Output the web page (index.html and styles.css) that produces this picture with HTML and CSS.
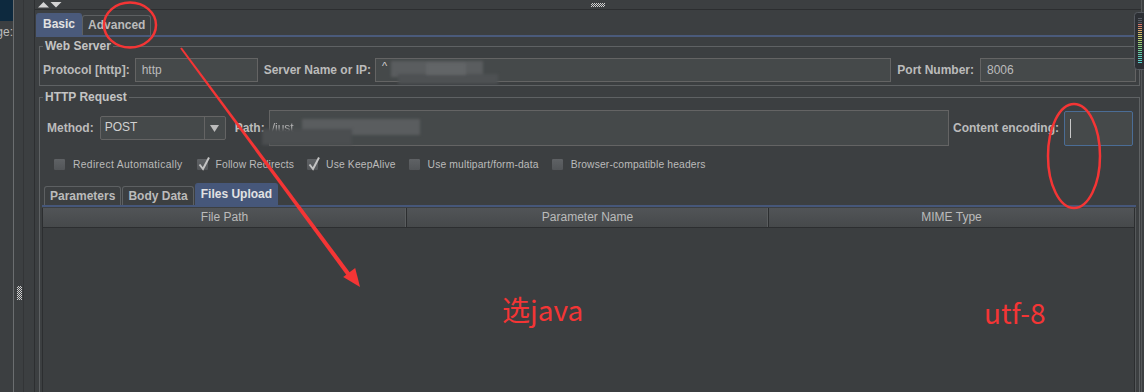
FILE: index.html
```html
<!DOCTYPE html>
<html>
<head>
<meta charset="utf-8">
<title>HTTP Request</title>
<link rel="stylesheet" href="styles.css">
</head>
<body>
<div class="app">
  <aside class="tree">
    <div class="tree-sel"></div>
    <div class="tree-row"><span>Message:</span></div>
  </aside>
  <div class="split">
    <div class="split-a"><div class="grip-v"></div></div>
    <div class="split-b"></div>
  </div>
  <main class="main">
    <div class="topbar">
      <svg class="arrows" width="24" height="6" viewBox="0 0 24 6">
        <polygon points="0,5.5 5.5,0 11,5.5" fill="#d4d4d4"/>
        <polygon points="12.5,0 23.5,0 18,5.5" fill="#d4d4d4"/>
      </svg>
      <div class="grip-h"></div>
    </div>
    <div class="tabs">
      <div class="tab sel">Basic</div>
      <div class="tab">Advanced</div>
    </div>
    <div class="tabline"></div>
    <div class="content">
      <fieldset class="group ws">
        <legend>Web Server</legend>
        <div class="row">
          <span class="lbl">Protocol [http]:</span>
          <div class="field proto">http</div>
          <span class="lbl gap7">Server Name or IP:</span>
          <div class="field server"><span class="mark">^</span><span class="blur b1"></span><span class="blur b2"></span><span class="blur b3"></span></div>
          <span class="lbl gap6">Port Number:</span>
          <div class="field port">8006</div>
        </div>
      </fieldset>
      <fieldset class="group http">
        <legend>HTTP Request</legend>
        <div class="row method-row">
          <span class="lbl">Method:</span>
          <div class="combo">
            <span class="combo-val">POST</span>
            <span class="combo-btn"><svg width="9" height="7" viewBox="0 0 9 7"><polygon points="0,0 9,0 4.5,7" fill="#bbbbbb"/></svg></span>
          </div>
          <span class="lbl path-lbl">Path:</span>
          <div class="field path"><span class="path-txt">/just</span><span class="blur p1"></span><span class="blur p2"></span></div>
          <span class="lbl gap5">Content encoding:</span>
          <div class="field enc"><span class="caret"></span></div>
        </div>
        <div class="checks">
          <label class="chk"><span class="box"></span>Redirect Automatically</label>
          <label class="chk"><span class="box on"><svg width="14" height="15" viewBox="0 0 14 15"><polyline points="2.5,8.5 6,13 12,1.5" fill="none" stroke="#c4c4c4" stroke-width="2"/></svg></span>Follow Redirects</label>
          <label class="chk"><span class="box on"><svg width="14" height="15" viewBox="0 0 14 15"><polyline points="2.5,8.5 6,13 12,1.5" fill="none" stroke="#c4c4c4" stroke-width="2"/></svg></span>Use KeepAlive</label>
          <label class="chk"><span class="box"></span>Use multipart/form-data</label>
          <label class="chk"><span class="box"></span>Browser-compatible headers</label>
        </div>
        <div class="subtabs">
          <div class="stab">Parameters</div>
          <div class="stab">Body Data</div>
          <div class="stab sel">Files Upload</div>
        </div>
        <div class="subline"></div>
        <div class="table">
          <div class="thead">
            <div class="th">File Path</div>
            <div class="th">Parameter Name</div>
            <div class="th last">MIME Type</div>
          </div>
          <div class="tbody"></div>
        </div>
      </fieldset>
    </div>
  </main>
</div>

<div class="memwidget">
  <svg width="10" height="58" viewBox="0 0 10 58">
    <rect x="0.5" y="0.5" width="12" height="57" rx="3" fill="#2c2f34" stroke="#565a61"/>
    <g stroke-width="1">
      <line x1="4" x2="8" y1="6.5" y2="6.5" stroke="#5a5e66"/>
      <line x1="4" x2="8" y1="8.5" y2="8.5" stroke="#5a5e66"/>
      <line x1="4" x2="8" y1="10.5" y2="10.5" stroke="#5a5e66"/>
      <line x1="4" x2="8" y1="12.5" y2="12.5" stroke="#d9766a"/>
      <line x1="4" x2="8" y1="14.5" y2="14.5" stroke="#d9856a"/>
      <line x1="4" x2="8" y1="16.5" y2="16.5" stroke="#d9956a"/>
      <line x1="4" x2="8" y1="18.5" y2="18.5" stroke="#d9a66a"/>
      <line x1="4" x2="8" y1="20.5" y2="20.5" stroke="#d6b66a"/>
      <line x1="4" x2="8" y1="22.5" y2="22.5" stroke="#d2c56b"/>
      <line x1="4" x2="8" y1="24.5" y2="24.5" stroke="#cccd6c"/>
      <line x1="4" x2="8" y1="26.5" y2="26.5" stroke="#c0cf6e"/>
      <line x1="4" x2="8" y1="28.5" y2="28.5" stroke="#b2cf70"/>
      <line x1="4" x2="8" y1="30.5" y2="30.5" stroke="#a2cf74"/>
      <line x1="4" x2="8" y1="32.5" y2="32.5" stroke="#94cf7a"/>
      <line x1="4" x2="8" y1="34.5" y2="34.5" stroke="#86cf82"/>
      <line x1="4" x2="8" y1="36.5" y2="36.5" stroke="#7acf8c"/>
      <line x1="4" x2="8" y1="38.5" y2="38.5" stroke="#70cf98"/>
      <line x1="4" x2="8" y1="40.5" y2="40.5" stroke="#68cfa4"/>
      <line x1="4" x2="8" y1="42.5" y2="42.5" stroke="#62cfb0"/>
      <line x1="4" x2="8" y1="44.5" y2="44.5" stroke="#5ecfba"/>
      <line x1="4" x2="8" y1="46.5" y2="46.5" stroke="#5acfc2"/>
      <line x1="4" x2="8" y1="48.5" y2="48.5" stroke="#58cfc8"/>
      <line x1="4" x2="8" y1="50.5" y2="50.5" stroke="#56cfcc"/>
    </g>
  </svg>
</div>

<svg class="annot" width="1144" height="392" viewBox="0 0 1144 392">
  <ellipse cx="130" cy="25" rx="26" ry="22.5" fill="none" stroke="#f43535" stroke-width="2.5"/>
  <polygon points="180.2,48.6 181.8,47.4 350.9,273.9 347.5,276.5" fill="#f43535"/>
  <polygon points="360,287 343.2,277 355.2,268" fill="#f43535"/>
  <ellipse cx="1074" cy="156" rx="26" ry="52" fill="none" stroke="#f43535" stroke-width="2.5"/>
</svg>
<div class="note note1">选java</div>
<div class="note note2">utf-8</div>
</body>
</html>
```
FILE: styles.css
```css
* { box-sizing: border-box; }
html, body {
  margin: 0;
  width: 1144px;
  height: 392px;
  overflow: hidden;
  background: #3c3f41;
}
body {
  position: relative;
  font-family: "Liberation Sans", Arial, sans-serif;
  font-size: 12px;
  color: #bbbbbb;
}

.app {
  display: flex;
  height: 392px;
  padding-right: 2px;
}

/* left tree panel (clipped) */
.tree {
  width: 14px;
  flex: none;
  border-right: 1px solid #6b6e70;
  overflow: hidden;
  display: flex;
  flex-direction: column;
}
.tree-sel {
  height: 21px;
  background: #0d293e;
}
.tree-row {
  height: 20px;
  display: flex;
  justify-content: flex-end;
  align-items: center;
  white-space: nowrap;
  font-size: 12px;
  color: #bbbbbb;
  padding-top: 1px;
}

/* splitter */
.split {
  width: 21px;
  flex: none;
  display: flex;
  border-right: 1px solid #2d2f31;
}
.split-a {
  width: 10px;
  border-right: 1px solid #333537;
  display: flex;
  flex-direction: column;
  align-items: flex-end;
}
.grip-v {
  width: 5px;
  height: 14px;
  margin-top: 286px;
  margin-right: 1px;
  background: repeating-conic-gradient(#d0d0d0 0 25%, transparent 0 50%) 0 0 / 2px 2px;
}
.split-b {
  flex: 1;
}

/* main panel */
.main {
  flex: 1;
  display: flex;
  flex-direction: column;
  border-right: 1px solid #55585a;
  overflow: hidden;
}
.topbar {
  height: 10px;
  flex: none;
  display: flex;
  align-items: flex-start;
  border-bottom: 1px solid #2c2e30;
}
.arrows {
  margin: 2px 0 0 3px;
}
.grip-h {
  width: 14px;
  height: 4px;
  margin: 3px 0 0 529px;
  background: repeating-conic-gradient(#d0d0d0 0 25%, transparent 0 50%) 0 0 / 2px 2px;
}

.tabs {
  display: flex;
  align-items: flex-end;
  height: 22px;
  margin-top: 3px;
  padding-left: 1px;
  flex: none;
}
.tab {
  height: 20px;
  line-height: 19px;
  padding: 0 5px;
  border: 1px solid #5d6062;
  border-bottom: none;
  border-radius: 3px 3px 0 0;
  font-weight: bold;
  font-size: 12px;
  color: #bbbbbb;
}
.tab.sel {
  height: 22px;
  line-height: 21px;
  padding: 0 6px;
  background: #4a5a7b;
  border-color: #4a5a7b;
  color: #e2e2e2;
}
.tabline {
  height: 2px;
  flex: none;
  margin-left: 1px;
  background: #4a5a7b;
}

.content {
  flex: 1;
  display: flex;
  flex-direction: column;
  padding: 2px 1px 0 4px;
}

/* groups */
.group {
  margin: 0;
  min-width: 0;
  border: 1px solid #5f6264;
  padding: 0 3px 3px 2px;
}
.group legend {
  padding: 0 2px;
  margin-left: 1px;
  font-weight: bold;
  font-size: 12px;
  line-height: 14px;
  color: #c4c4c4;
}
.group.http {
  margin-top: 4px;
  flex: 1 0 auto;
  margin-bottom: -40px;
  padding-bottom: 0;
}

.row {
  display: flex;
  align-items: center;
}
.ws .row {
  margin-top: 5px;
  padding-left: 1px;
}
.lbl {
  font-weight: bold;
  font-size: 12px;
  color: #bbbbbb;
  white-space: nowrap;
  margin-right: 5px;
}
.gap7 { margin-left: 6px; margin-right: 4px; }
.gap6 { margin-left: 6px; margin-right: 6px; }
.gap5 { margin-left: 4px; margin-right: 5px; }

.field {
  position: relative;
  height: 24px;
  line-height: 22px;
  padding: 0 6px;
  background: #45494a;
  border: 1px solid #646464;
  font-size: 12px;
  color: #bbbbbb;
  white-space: nowrap;
}
.proto { width: 123px; }
.server { flex: 1; }
.port { width: 156px; }

.mark {
  position: absolute;
  left: 6px;
  top: -4px;
  font-size: 11px;
  color: #d0d0d0;
}
.blur {
  position: absolute;
  filter: blur(1.5px);
}
.b1 { left: 15px; top: 2px; width: 92px; height: 16px; background: #5a5d5f; }
.b2 { left: 22px; top: 15px; width: 100px; height: 10px; background: #4e5153; }
.b3 { left: 50px; top: 4px; width: 40px; height: 12px; background: #626567; }

/* method row */
.method-row {
  margin-top: 6px;
  padding: 0 3px 0 5px;
  height: 36px;
}
.combo {
  width: 126px;
  height: 24px;
  display: flex;
  margin-left: 1px;
  background: #45494a;
  border: 1px solid #646464;
  border-radius: 2px;
}
.combo-val {
  flex: 1;
  padding-left: 4px;
  line-height: 20px;
  font-size: 12px;
  color: #d2d2d2;
}
.combo-btn {
  width: 21px;
  border-left: 1px solid #646464;
  display: flex;
  align-items: center;
  justify-content: center;
}
.path-lbl { margin-left: 9px; margin-right: 4px; }
.path {
  flex: 1;
  height: 36px;
  line-height: 34px;
  padding-left: 2px;
}
.path-txt {
  color: #b5b5b5;
  filter: blur(0.4px);
}
.p1 { left: 32px; top: 8px; width: 118px; height: 16px; background: #5a5d5f; }
.p2 { left: -8px; top: 18px; width: 90px; height: 16px; background: #4b4e50; }
.enc {
  width: 69px;
  height: 35px;
  border: 1px solid #4b6d96;
  border-radius: 2px;
}
.caret {
  position: absolute;
  left: 5px;
  top: 7px;
  width: 1px;
  height: 19px;
  background: #c8c8c8;
}

/* checkboxes */
.checks {
  display: flex;
  align-items: center;
  margin-top: 12px;
  padding-left: 11px;
  height: 13px;
}
.chk {
  display: flex;
  align-items: center;
  font-size: 10.3px;
  letter-spacing: 0.15px;
  color: #bbbbbb;
  margin-right: 12px;
  white-space: nowrap;
}
.chk:first-child {
  letter-spacing: 0.35px;
  margin-right: 13px;
}
.box {
  position: relative;
  width: 13px;
  height: 13px;
  margin-right: 7px;
  border-radius: 2px;
  background: linear-gradient(#5f6265, #525558);
  border: 1px solid #3d3f41;
}
.box svg {
  position: absolute;
  left: 0;
  top: -3px;
}

/* sub tabs */
.subtabs {
  display: flex;
  align-items: flex-end;
  height: 22px;
  margin-top: 12px;
  padding-left: 2px;
}
.stab {
  height: 19px;
  line-height: 18px;
  padding: 0 5px;
  border: 1px solid #5d6062;
  border-bottom: none;
  border-radius: 3px 3px 0 0;
  font-weight: bold;
  font-size: 12px;
  color: #bbbbbb;
  margin-right: 1px;
}
.stab.sel {
  height: 22px;
  line-height: 20px;
  background: #46577a;
  border-color: #46577a;
  color: #e2e2e2;
}
.subline {
  height: 2px;
  background: #46577a;
}
.table {
  margin-top: 1px;
  margin-right: 1px;
  border-left: 1px solid #2c2e30;
  border-right: 1px solid #2c2e30;
  box-shadow: 1px 0 0 #55585a;
}
.thead {
  display: grid;
  grid-template-columns: 364px 362px 1fr;
  height: 20px;
  background: linear-gradient(#515457, #46494b);
  border-bottom: 1px solid #2c2e30;
}
.th {
  text-align: center;
  line-height: 19px;
  font-size: 12px;
  color: #bbbbbb;
  border-right: 1px solid #2c2e30;
  box-shadow: inset -2px 0 0 -1px #5a5d5f;
}
.th.last {
  border-right: none;
  box-shadow: none;
}
.tbody {
  height: 220px;
  background: #3b3e40;
}

/* overlays */
.memwidget {
  position: absolute;
  left: 1134px;
  top: 12px;
  width: 10px;
  height: 58px;
  overflow: hidden;
}
.annot {
  position: absolute;
  left: 0;
  top: 0;
  pointer-events: none;
}
.note {
  position: absolute;
  font-family: "Noto Sans CJK SC", "Noto Sans", sans-serif;
  font-size: 28px;
  line-height: 28px;
  color: #f43535;
  white-space: nowrap;
}
.note1 { left: 502px; top: 295px; }
.note2 { left: 984px; top: 298px; }
```
